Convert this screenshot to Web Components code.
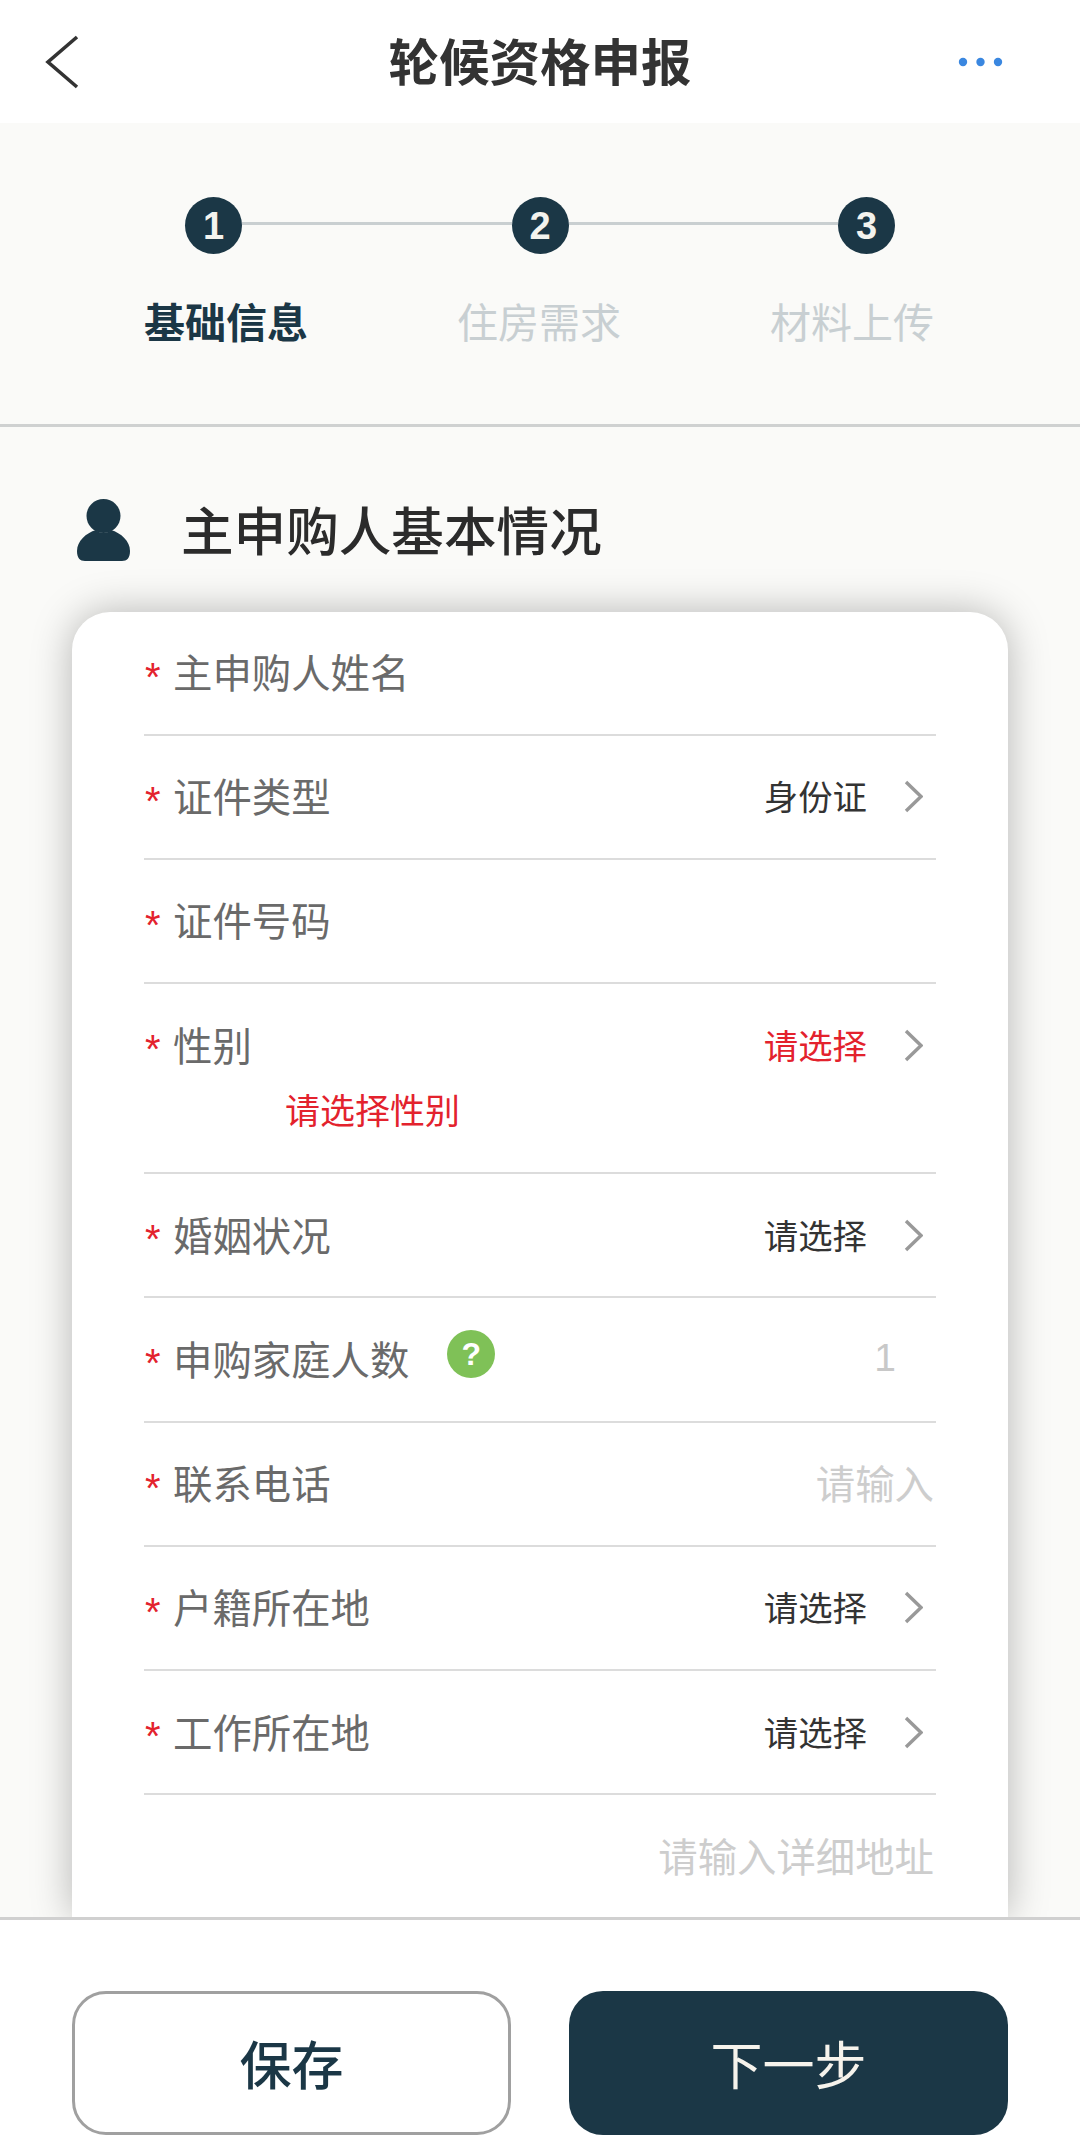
<!DOCTYPE html>
<html lang="zh-CN">
<head>
<meta charset="utf-8">
<title>轮候资格申报</title>
<style>
html,body{margin:0;padding:0;background:#fff;}
body{font-family:"Noto Sans CJK SC","Noto Sans",sans-serif;}
app-shell{width:1080px;height:2151px;}
</style>
</head>
<body>
<app-shell>
  <app-header slot="header">轮候资格申报</app-header>
  <step-bar slot="steps">
    <step-label active>基础信息</step-label>
    <step-label>住房需求</step-label>
    <step-label>材料上传</step-label>
  </step-bar>
  <section-title>主申购人基本情况</section-title>
  <form-card>
    <form-row first required>主申购人姓名</form-row>
    <form-row required select>证件类型<span slot="value">身份证</span></form-row>
    <form-row required>证件号码</form-row>
    <form-row required select invalid>性别<span slot="value">请选择</span><span slot="error">请选择性别</span></form-row>
    <form-row required select>婚姻状况<span slot="value">请选择</span></form-row>
    <form-row required number>申购家庭人数<help-dot slot="extra"></help-dot><span slot="value">1</span></form-row>
    <form-row required placeholder>联系电话<span slot="value">请输入</span></form-row>
    <form-row required select>户籍所在地<span slot="value">请选择</span></form-row>
    <form-row required select>工作所在地<span slot="value">请选择</span></form-row>
    <form-row placeholder><span slot="value">请输入详细地址</span></form-row>
  </form-card>
  <bottom-bar slot="footer"></bottom-bar>
</app-shell>
<script>
function define(name, css, html){
  customElements.define(name, class extends HTMLElement{
    constructor(){
      super();
      this.attachShadow({mode:'open'}).innerHTML='<style>'+css+'</style>'+html;
    }
  });
}
var CJK='"Noto Sans CJK SC","Noto Sans",sans-serif';

define('app-shell',
 ':host{display:flex;flex-direction:column;overflow:hidden;background:#fafaf8;}'+
 'main{flex:1;min-height:0;overflow:hidden;display:flex;flex-direction:column;}',
 '<slot name="header"></slot><slot name="steps"></slot><main><slot></slot></main><slot name="footer"></slot>');

define('app-header',
 ':host{display:grid;grid-template-columns:1fr auto 1fr;align-items:center;height:123px;background:#fff;color:#333;font:700 50.5px/1 '+CJK+';flex:none;}'+
 '.l{padding-left:45px;display:flex}.r{justify-self:end;padding-right:76px;display:flex}'+
 '.t{margin-bottom:5px}',
 '<div class="l"><svg width="36" height="54" viewBox="0 0 36 54"><path d="M32 2 L3 27 L32 52" fill="none" stroke="#333" stroke-width="3.6"/></svg></div>'+
 '<div class="t"><slot></slot></div>'+
 '<div class="r"><svg width="46" height="10" viewBox="0 0 46 10"><g fill="#3a87e0"><circle cx="5" cy="5" r="4.2"/><circle cx="22.5" cy="5" r="4.2"/><circle cx="40" cy="5" r="4.2"/></g></svg></div>');

define('step-bar',
 ':host{display:block;height:304px;box-sizing:border-box;background:#fafaf8;border-bottom:3px solid #cfd1d1;flex:none;}'+
 '.dots{display:flex;align-items:center;padding:74px 185px 0 185px;color:#f3f3ee;font:700 38px/1 "Liberation Sans",sans-serif;}'+
 '.d{width:57px;height:57px;border-radius:50%;background:#1b3746;display:flex;align-items:center;justify-content:center;flex:none;}'+
 '.c{flex:1;height:3px;background:#c9cfd1;margin-bottom:4px;}'+
 '.labels{display:flex;justify-content:space-between;padding:39px 146px 0 144px;}',
 '<div class="dots"><div class="d">1</div><div class="c"></div><div class="d">2</div><div class="c"></div><div class="d">3</div></div>'+
 '<div class="labels"><slot></slot></div>');

define('step-label',
 ':host{display:block;font:400 41px/54px '+CJK+';color:#c8cfd2;}'+
 ':host([active]){font-weight:700;color:#1b3746;}',
 '<slot></slot>');

define('section-title',
 ':host{display:flex;align-items:center;flex:none;height:185px;box-sizing:border-box;padding:18px 0 0 77px;color:#2b2b2b;font:500 52.6px/1 '+CJK+';}'+
 'svg{margin-right:51px;flex:none;margin-bottom:-2px}',
 '<svg width="53" height="62" viewBox="0 0 53 62"><g fill="#1b3746"><circle cx="26.5" cy="17" r="17"/><path d="M0 52 C0 42 9 34 19 31 C23 35 30 35 34 31 C44 34 53 42 53 52 C53 59 50 62 45 62 L8 62 C3 62 0 59 0 52Z"/></g></svg><slot></slot>');

define('form-card',
 ':host{display:block;box-sizing:border-box;margin:0 72px;background:#fff;border-radius:38px 38px 0 0;padding:0 72px;box-shadow:0 0 40px rgba(0,0,0,.28);flex:1;}',
 '<slot></slot>');

define('form-row',
 ':host{display:block;border-bottom:2px solid #dcdcdc;box-sizing:border-box;font:400 39.4px/44px '+CJK+';color:#6a6a6a;}'+
 ':host(:last-child){border-bottom:0;}'+
 '.main{display:flex;align-items:center;height:122.2px;}'+
 ':host([first]) .main{height:121.6px;}'+
 '.star{flex:none;width:30px;height:14px;color:#e3222d;font:400 40px/1 "Liberation Sans",sans-serif;}'+
 '.star span{display:block;margin-top:-9px;padding-left:1px}'+
 ':host(:not([required])) .star{visibility:hidden}'+
 '.lab{margin-bottom:3px;margin-left:-1px}'+
 '.extra{display:flex;flex:none}'+
 '.val{margin-left:auto;display:flex;align-items:center;font-size:34.4px;color:#333;}'+
 '.txt{margin-bottom:3px}'+
 '.chev{display:none;margin:0 13px 0 37px}'+
 ':host([select]) .chev{display:block}'+
 ':host([placeholder]) .val{font-size:39.4px;color:#cdcdcd;padding-right:2px}'+
 ':host([number]) .val{font:400 39px/44px "Liberation Sans",sans-serif;color:#c8c8c8;padding-right:40px;}'+
 '.err{display:none;color:#e3222d;font-size:35px;line-height:48px;margin-top:-21px;padding:0 0 39px 141px;}'+
 ':host([invalid]) .err{display:block}'+
 ':host([invalid]) .val{color:#e3222d}',
 '<div class="main"><div class="star"><span>*</span></div><div class="lab"><slot></slot></div><div class="extra"><slot name="extra"></slot></div>'+
 '<div class="val"><div class="txt"><slot name="value"></slot></div>'+
 '<svg class="chev" width="19" height="33" viewBox="0 0 19 33"><path d="M2 2 L17 16.5 L2 31" fill="none" stroke="#999" stroke-width="3.4"/></svg></div></div>'+
 '<div class="err"><slot name="error"></slot></div>');

define('help-dot',
 ':host{display:flex;width:48px;height:48px;border-radius:50%;background:#7fc157;color:#fff;align-items:center;justify-content:center;font:700 32px/1 "Liberation Sans",sans-serif;margin:0 0 10px 38px;}',
 '?');

define('bottom-bar',
 ':host{display:flex;flex:none;height:234px;box-sizing:border-box;background:#fff;border-top:3px solid #d0d0d0;padding:71px 72px 0 72px;gap:58px;align-items:flex-start;font:500 52px/1 '+CJK+';}'+
 'div{height:144px;box-sizing:border-box;border-radius:34px;display:flex;align-items:center;justify-content:center;}'+
 '.s{width:439px;background:#fff;border:3px solid #a0a0a0;color:#1b3746;}'+
 '.n{flex:1;background:#1b3746;color:#f6f3ec;font-weight:400;}',
 '<div class="s">保存</div><div class="n">下一步</div>');
</script>
</body>
</html>
